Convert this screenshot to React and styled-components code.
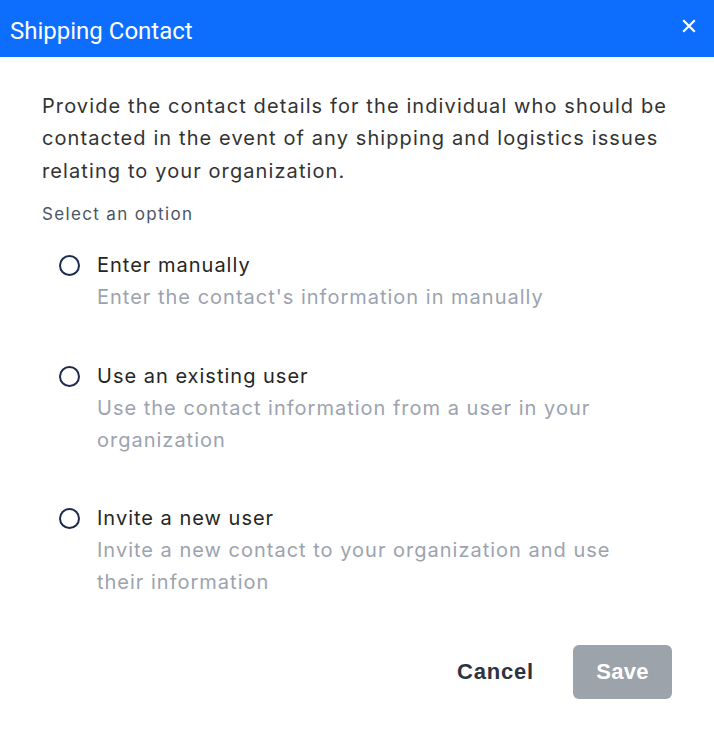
import React from "react";
import styled, { createGlobalStyle } from "styled-components";

const Global = createGlobalStyle`
  html, body { margin: 0; padding: 0; background: #fff; }
  body { font-family: Inter, "Noto Sans", sans-serif; }
  * { box-sizing: border-box; }
`;

const Modal = styled.div`
  width: 714px;
  height: 731px;
  display: flex;
  flex-direction: column;
  background: #fff;
`;

const Header = styled.div`
  height: 57px;
  background: #0d6efd;
  display: flex;
  align-items: center;
  justify-content: space-between;
  padding: 0 18px 0 10px;
`;

const Title = styled.h1`
  margin: 0;
  font-family: Roboto, sans-serif;
  font-weight: 400;
  font-size: 24px;
  color: #fff;
  padding-top: 4px;
`;

const Close = styled.button`
  background: none;
  border: none;
  padding: 0;
  color: #fff;
  display: flex;
  cursor: pointer;
  margin-top: -6px;
`;

const Body = styled.div`
  padding: 33px 30px 0 42px;
  flex: 1;
  display: flex;
  flex-direction: column;
`;

const Intro = styled.p`
  margin: 0;
  font-size: 20px;
  letter-spacing: 1.1px;
  line-height: 32.4px;
  color: #333;
`;

const Prompt = styled.div`
  margin-top: 15px;
  font-size: 17px;
  letter-spacing: 1.35px;
  color: #4b5563;
  line-height: 24px;
`;

const Options = styled.div`
  display: flex;
  flex-direction: column;
  gap: 46.5px;
  margin-top: 23px;
  padding: 0 30px 0 17px;
`;

const Option = styled.label`
  display: grid;
  grid-template-columns: 22px 1fr;
  column-gap: 16px;
  cursor: pointer;
`;

const Radio = styled.span`
  width: 21px;
  height: 21px;
  border: 2px solid #1b2a4e;
  border-radius: 50%;
  margin-top: 6px;
`;

const OptText = styled.div`
  display: flex;
  flex-direction: column;
`;

const OptLabel = styled.span`
  font-size: 20px;
  letter-spacing: 1px;
  line-height: 32px;
  color: #262626;
`;

const OptDesc = styled.span`
  font-size: 20px;
  letter-spacing: 1px;
  line-height: 32px;
  color: #9ca3af;
`;

const Footer = styled.div`
  display: flex;
  justify-content: flex-end;
  align-items: center;
  gap: 39px;
  padding: 0 42px 32px 0;
`;

const CancelBtn = styled.button`
  background: none;
  border: none;
  font-family: "Liberation Sans", Arial, sans-serif;
  font-weight: 700;
  font-size: 22px;
  letter-spacing: 0.8px;
  color: #2d3441;
  padding: 0;
`;

const SaveBtn = styled.button`
  width: 99px;
  height: 54px;
  border: none;
  border-radius: 6px;
  background: #9ca3aa;
  color: #fff;
  font-family: "Liberation Sans", Arial, sans-serif;
  font-weight: 700;
  font-size: 22px;
  letter-spacing: 0.3px;
`;

const options = [
  { label: "Enter manually", desc: "Enter the contact's information in manually" },
  { label: "Use an existing user", desc: "Use the contact information from a user in your organization" },
  { label: "Invite a new user", desc: "Invite a new contact to your organization and use their information" },
];

export default function App() {
  return (
    <>
      <Global />
      <Modal>
        <Header>
          <Title>Shipping Contact</Title>
          <Close aria-label="Close">
            <svg width="14" height="14" viewBox="0 0 14 14">
              <path d="M2 2 L12 12 M12 2 L2 12" stroke="#fff" strokeWidth="2.2" strokeLinecap="square" />
            </svg>
          </Close>
        </Header>
        <Body>
          <Intro>
            Provide the contact details for the individual who should be contacted in the event of any shipping and logistics issues relating to your organization.
          </Intro>
          <Prompt>Select an option</Prompt>
          <Options>
            {options.map((o) => (
              <Option key={o.label}>
                <Radio />
                <OptText>
                  <OptLabel>{o.label}</OptLabel>
                  <OptDesc>{o.desc}</OptDesc>
                </OptText>
              </Option>
            ))}
          </Options>
        </Body>
        <Footer>
          <CancelBtn>Cancel</CancelBtn>
          <SaveBtn>Save</SaveBtn>
        </Footer>
      </Modal>
    </>
  );
}
